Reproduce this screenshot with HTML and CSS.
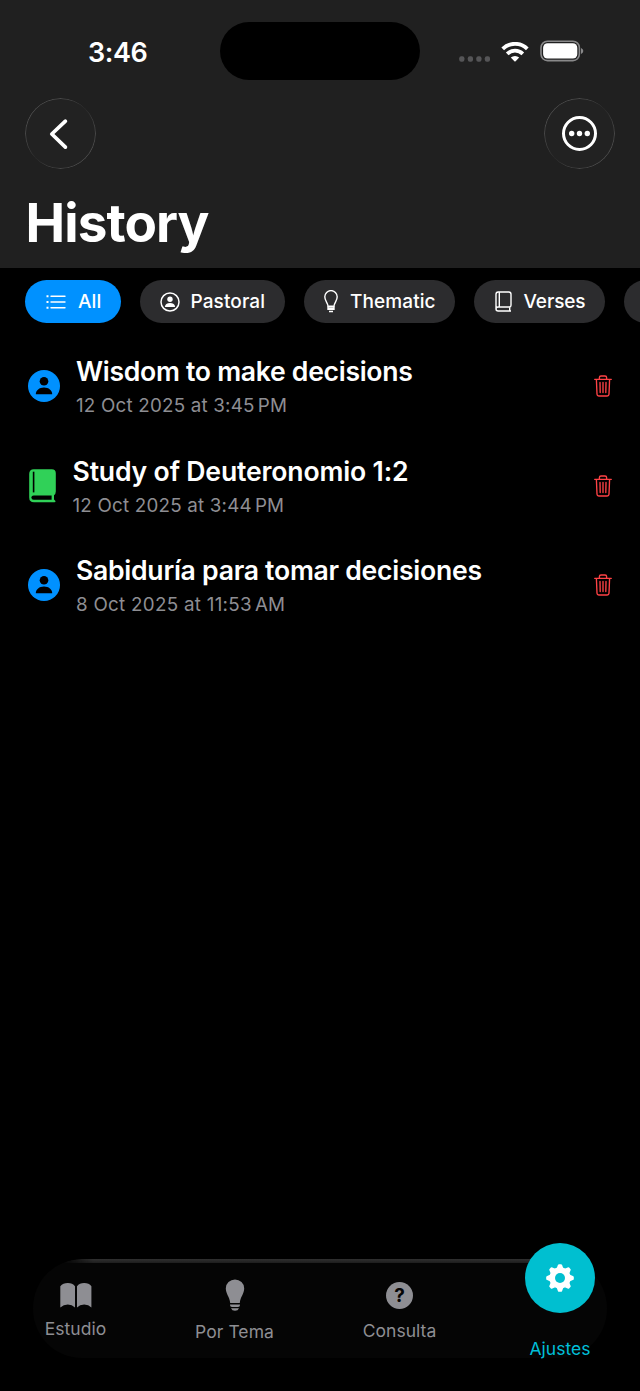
FILE: index.html
```html
<!DOCTYPE html>
<html lang="en">
<head>
<meta charset="utf-8">
<title>History</title>
<link rel="stylesheet" href="styles.css">
</head>
<body>
<svg class="defs" aria-hidden="true">
  <symbol id="trash" viewBox="0 0 18 22"><g fill="none" stroke="#ff4245" stroke-width="1.35" stroke-linecap="round" stroke-linejoin="round"><path d="M.7 4.3H17.3M2.4 4.5 3 19.2Q3.1 21 4.8 21H13.2Q14.9 21 15 19.2L15.6 4.5M5.4 4V2.6Q5.4 1 7 1H11Q12.6 1 12.6 2.6V4M6 7.4 6.2 17.6M9 7.4V17.6M12 7.4 11.8 17.6"/></g></symbol>
  <symbol id="person" viewBox="0 0 32 32"><circle cx="16" cy="16" r="16" fill="#0091ff"/><circle cx="16" cy="11.2" r="4.3" fill="#000"/><path d="M7.8 24.2C7.8 20.2 11.3 17.4 16 17.4S24.2 20.2 24.2 24.2Z" fill="#000"/></symbol>
</svg>
<div class="screen">
  <header class="header">
    <div class="status">
      <span class="time">3:46</span>
      <span class="island"></span>
      <div class="signals">
        <svg class="dots" width="32" height="6" viewBox="0 0 32 6" fill="#555557"><rect x=".2" y=".3" width="5.2" height="5.4" rx="2"/><rect x="8.8" y=".3" width="5.2" height="5.4" rx="2"/><rect x="17.3" y=".3" width="5.2" height="5.4" rx="2"/><rect x="25.8" y=".3" width="5.2" height="5.4" rx="2"/></svg>
        <svg class="wifi" width="28" height="20" viewBox="0 0 28 20"><g fill="none" stroke="#fff" stroke-width="3.8"><path d="M1.7 6.8A17.6 17.6 0 0 1 26.3 6.8"/><path d="M6.2 11.8A11.2 11.2 0 0 1 21.8 11.8"/></g><path d="M9.8 15.6A6.1 6.1 0 0 1 18.2 15.6L14.6 19.2Q14 19.8 13.4 19.2Z" fill="#fff"/></svg>
        <svg width="44" height="22" viewBox="0 0 44 22"><rect x="1" y="1.2" width="38.4" height="19.4" rx="6.5" fill="none" stroke="#89898a" stroke-width="1.6"/><rect x="3.1" y="3.3" width="34.2" height="15.2" rx="4.4" fill="#fff"/><path d="M41 8Q43.3 9 43.3 11T41 14Z" fill="#89898a"/></svg>
      </div>
    </div>
    <nav class="toolbar">
      <button class="glass" aria-label="Back"><svg width="24" height="32" viewBox="0 0 24 32"><path d="M16.4 3.2 2.8 16 16.4 29.1" fill="none" stroke="#fff" stroke-width="3.7" stroke-linecap="round" stroke-linejoin="round"/></svg></button>
      <button class="glass" aria-label="More"><svg width="36" height="36" viewBox="0.5 0.5 36 36"><circle cx="18" cy="18" r="16" fill="none" stroke="#fff" stroke-width="3"/><g fill="#fff"><circle cx="10.2" cy="18" r="2.7"/><circle cx="18" cy="18" r="2.7"/><circle cx="25.8" cy="18" r="2.7"/></g></svg></button>
    </nav>
    <h1 class="title">History</h1>
  </header>

  <div class="filters">
    <button class="chip all"><svg width="20" height="16" viewBox="0 0 20 16" fill="none" stroke="#fff"><path d="M5 2.2H19M5 8H19M5 13.8H19" stroke-width="1.4" stroke-linecap="round"/><path d="M.5 2.2H2.5M.5 8H2.5M.5 13.8H2.5" stroke-width="2"/></svg><span>All</span></button>
    <button class="chip pastoral"><svg width="20" height="20" viewBox="0 0 20 20"><circle cx="10" cy="10" r="9" fill="none" stroke="#fff" stroke-width="1.5"/><circle cx="10" cy="7.2" r="2.7" fill="#fff"/><path d="M4.9 14.9C4.9 12.4 7.1 10.9 10 10.9S15.1 12.4 15.1 14.9Z" fill="#fff"/></svg><span>Pastoral</span></button>
    <button class="chip thematic"><svg width="14" height="23" viewBox="0 0 14 23" fill="none" stroke="#fff" stroke-width="1.4"><path d="M4 16.3C4 12.7.8 11.2.8 6.8A6.2 6.2 0 0 1 13.2 6.8C13.2 11.2 10 12.7 10 16.3Z"/><path d="M4 16.5V19.4H10V16.5M4 18H10M5 21.5H9"/></svg><span>Thematic</span></button>
    <button class="chip verses"><svg width="17" height="21" viewBox="0 0 17 21" fill="none" stroke="#fff" stroke-width="1.4" stroke-linejoin="round"><path d="M1 18V3.2Q1 1 3.2 1H13.8Q16 1 16 3.2V14.2Q16 16 14.3 16H3.2Q1 16 1 18T3.2 20H16M4.3 1V16M14.7 16V20"/></svg><span>Verses</span></button>
    <span class="chip more"></span>
  </div>

  <main class="list">
    <article class="row">
      <svg class="avatar" width="32" height="32"><use href="#person"/></svg>
      <div class="text"><h2 class="t1">Wisdom to make decisions</h2><p class="d1">12 Oct 2025 at 3:45<i></i>PM</p></div>
      <svg class="trash" width="18" height="22"><use href="#trash"/></svg>
    </article>
    <article class="row">
      <svg class="book" width="27" height="34" viewBox="0 0 27 34"><path d="M4.8.2H22.8Q26.8.2 26.8 4.2V22.5Q26.8 25 25 26.3V30.4L26.5 32Q26.7 33.3 25.4 33.3H5Q.2 33.3.2 28.6V5Q.2.2 4.8.2Z" fill="#30d158"/><path d="M4.6 2.7V23.4" stroke="#000" stroke-width="1.6"/><path d="M4.6 26.4H22.6V30.8H4.6Q2.4 30.8 2.4 28.6T4.6 26.4Z" fill="#000"/></svg>
      <div class="text"><h2 class="t2">Study of Deuteronomio 1:2</h2><p class="d2">12 Oct 2025 at 3:44<i></i>PM</p></div>
      <svg class="trash" width="18" height="22"><use href="#trash"/></svg>
    </article>
    <article class="row">
      <svg class="avatar" width="32" height="32"><use href="#person"/></svg>
      <div class="text"><h2 class="t3">Sabiduría para tomar decisiones</h2><p class="d3">8 Oct 2025 at 11:53<i></i>AM</p></div>
      <svg class="trash" width="18" height="22"><use href="#trash"/></svg>
    </article>
  </main>

  <nav class="tabs">
    <div class="tab estudio"><svg width="32" height="26" viewBox="0 0 32 26" fill="#8e8e93"><path d="M.3 4.2Q3 1 7.8 1T15 4.2V25.4Q12 22.5 7.8 22.5T.3 25.4ZM17 4.2Q19.4 1 24.2 1T31.4 4.2V25.4Q28.6 22.5 24.2 22.5T17 25.4Z"/></svg><span>Estudio</span></div>
    <div class="tab tema"><svg width="20" height="32" viewBox="0 0 20 32" fill="#8e8e93"><path d="M5.2 24C4.6 17.5.8 15.2.8 9.3A9.2 8.8 0 0 1 19.2 9.3C19.2 15.2 15.4 17.5 14.8 24ZM5 25.5H15V26Q15 28 13 28H7Q5 28 5 26ZM6 29.2H14Q13 31.7 10 31.7T6 29.2Z"/></svg><span>Por Tema</span></div>
    <div class="tab consulta"><span class="help">?</span><span>Consulta</span></div>
    <div class="tab ajustes"><span class="orb"><svg width="28" height="28" viewBox="-14 -14 28 28"><g fill="#fff"><circle r="10.7"/><g id="teeth"><path id="tooth" d="M-3.2-10-2.1-12.9Q-1.8-13.8-.9-13.8H.9Q1.8-13.8 2.1-12.9L3.2-10Z"/><use href="#tooth" transform="rotate(45)"/><use href="#tooth" transform="rotate(90)"/><use href="#tooth" transform="rotate(135)"/></g><use href="#teeth" transform="rotate(180)"/></g><circle r="5" fill="#00bfd0"/></svg></span><span>Ajustes</span></div>
  </nav>
</div>
</body>
</html>
```

FILE: styles.css
```css
* { box-sizing: border-box; margin: 0; padding: 0; }
body { background: #000; color: #fff; font-family: Inter, "Liberation Sans", sans-serif; }
button { border: 0; background: none; color: inherit; font: inherit; }
svg { display: block; flex: none; }
.defs { position: absolute; width: 0; height: 0; }
.screen { width: 640px; height: 1391px; display: flex; flex-direction: column; overflow: hidden; }

.header { height: 268px; background: #202020; flex: none; }
.status { height: 98px; display: grid; grid-template-columns: 220px 200px 220px; align-items: start; padding-top: 22px; }
.time { justify-self: start; margin-left: 88px; font-size: 27px; line-height: 61px; font-weight: 600; letter-spacing: -.4px; }
.island { height: 58px; border-radius: 29px; background: #000; }
.signals { display: flex; padding: 18px 0 0 38.5px; }
.dots { margin-top: 15.5px; }
.wifi { margin: 1.5px 11px 0 10.5px; }

.toolbar { display: flex; justify-content: space-between; padding: 0 25px; height: 71px; }
.glass { position: relative; width: 71px; height: 71px; border-radius: 50%; display: grid; place-items: center; background: #222; }
.glass::before { content: ""; position: absolute; inset: 0; padding: 1.2px; border-radius: 50%; background: linear-gradient(135deg, #505050 15%, #444 32%, #292929 50%, #444 68%, #505050 85%); mask: linear-gradient(#000 0 0) content-box exclude, linear-gradient(#000 0 0); }
.title { padding-left: 25.5px; margin-top: 22px; font-size: 53px; line-height: 64px; font-weight: 700; letter-spacing: -.9px; }

.filters { display: flex; gap: 19px; height: 74px; padding: 12px 0 0 25px; flex: none; }
.chip { height: 43px; border-radius: 21.5px; background: #2c2c2e; display: flex; align-items: center; flex: none; font-size: 19px; font-weight: 500; letter-spacing: .1px; white-space: nowrap; }
.all { width: 95.5px; background: #0091ff; padding-left: 21px; gap: 12px; }
.pastoral { width: 145.5px; padding-left: 20px; gap: 11px; }
.thematic { width: 151px; padding-left: 20px; gap: 12px; }
.verses { width: 131px; padding-left: 20.5px; gap: 12px; letter-spacing: -.1px; }
.more { width: 100px; }

.list { flex: none; padding-top: .5px; }
.row { height: 99.8px; display: flex; align-items: center; padding: 0 28px 13px; }
.text { flex: 1; padding-top: 5px; }
.avatar + .text { margin-left: 16px; }
.book { margin-left: 1px; }
.book + .text { margin-left: 16.5px; }
.row h2 { font-size: 26.6px; line-height: 34px; font-weight: 600; letter-spacing: -.3px; white-space: nowrap; }
.row .t2 { letter-spacing: -.17px; }
.row .t3 { letter-spacing: -.27px; }
.row p { font-size: 18.8px; line-height: 35px; color: #8e8e93; letter-spacing: .2px; white-space: nowrap; }
.row .d3 { letter-spacing: .28px; }
.row p i { display: inline-block; width: 3px; }

.tabs { position: relative; width: 574px; height: 99px; margin: auto 0 33px 33px; border-radius: 49px; background: #050505; flex: none; display: grid; grid-template-columns: 85px 233px 97px 224px; }
.tabs::before { content: ""; position: absolute; inset: 0; border-radius: 49px; background: linear-gradient(#303030 0, #202020 3.5px, transparent 4.5px); mask: linear-gradient(90deg, transparent 30px, #000 60px, #000 515px, transparent 545px); }
.tab { position: relative; display: flex; flex-direction: column; align-items: center; font-size: 17.5px; line-height: 24px; letter-spacing: .05px; color: #8e8e93; white-space: nowrap; }
.estudio { padding-top: 23px; gap: 9px; }
.tema { padding-top: 20px; gap: 9px; }
.consulta { padding-top: 23px; gap: 10px; }
.help { width: 27px; height: 27px; border-radius: 50%; background: #8e8e93; color: #050505; font-size: 19px; line-height: 27px; font-weight: 700; letter-spacing: 0; text-align: center; }
.ajustes { color: #00bfd8; margin-top: -16px; gap: 24px; }
.orb { width: 70px; height: 70px; border-radius: 50%; background: #00bfd0; display: grid; place-items: center; }
```
